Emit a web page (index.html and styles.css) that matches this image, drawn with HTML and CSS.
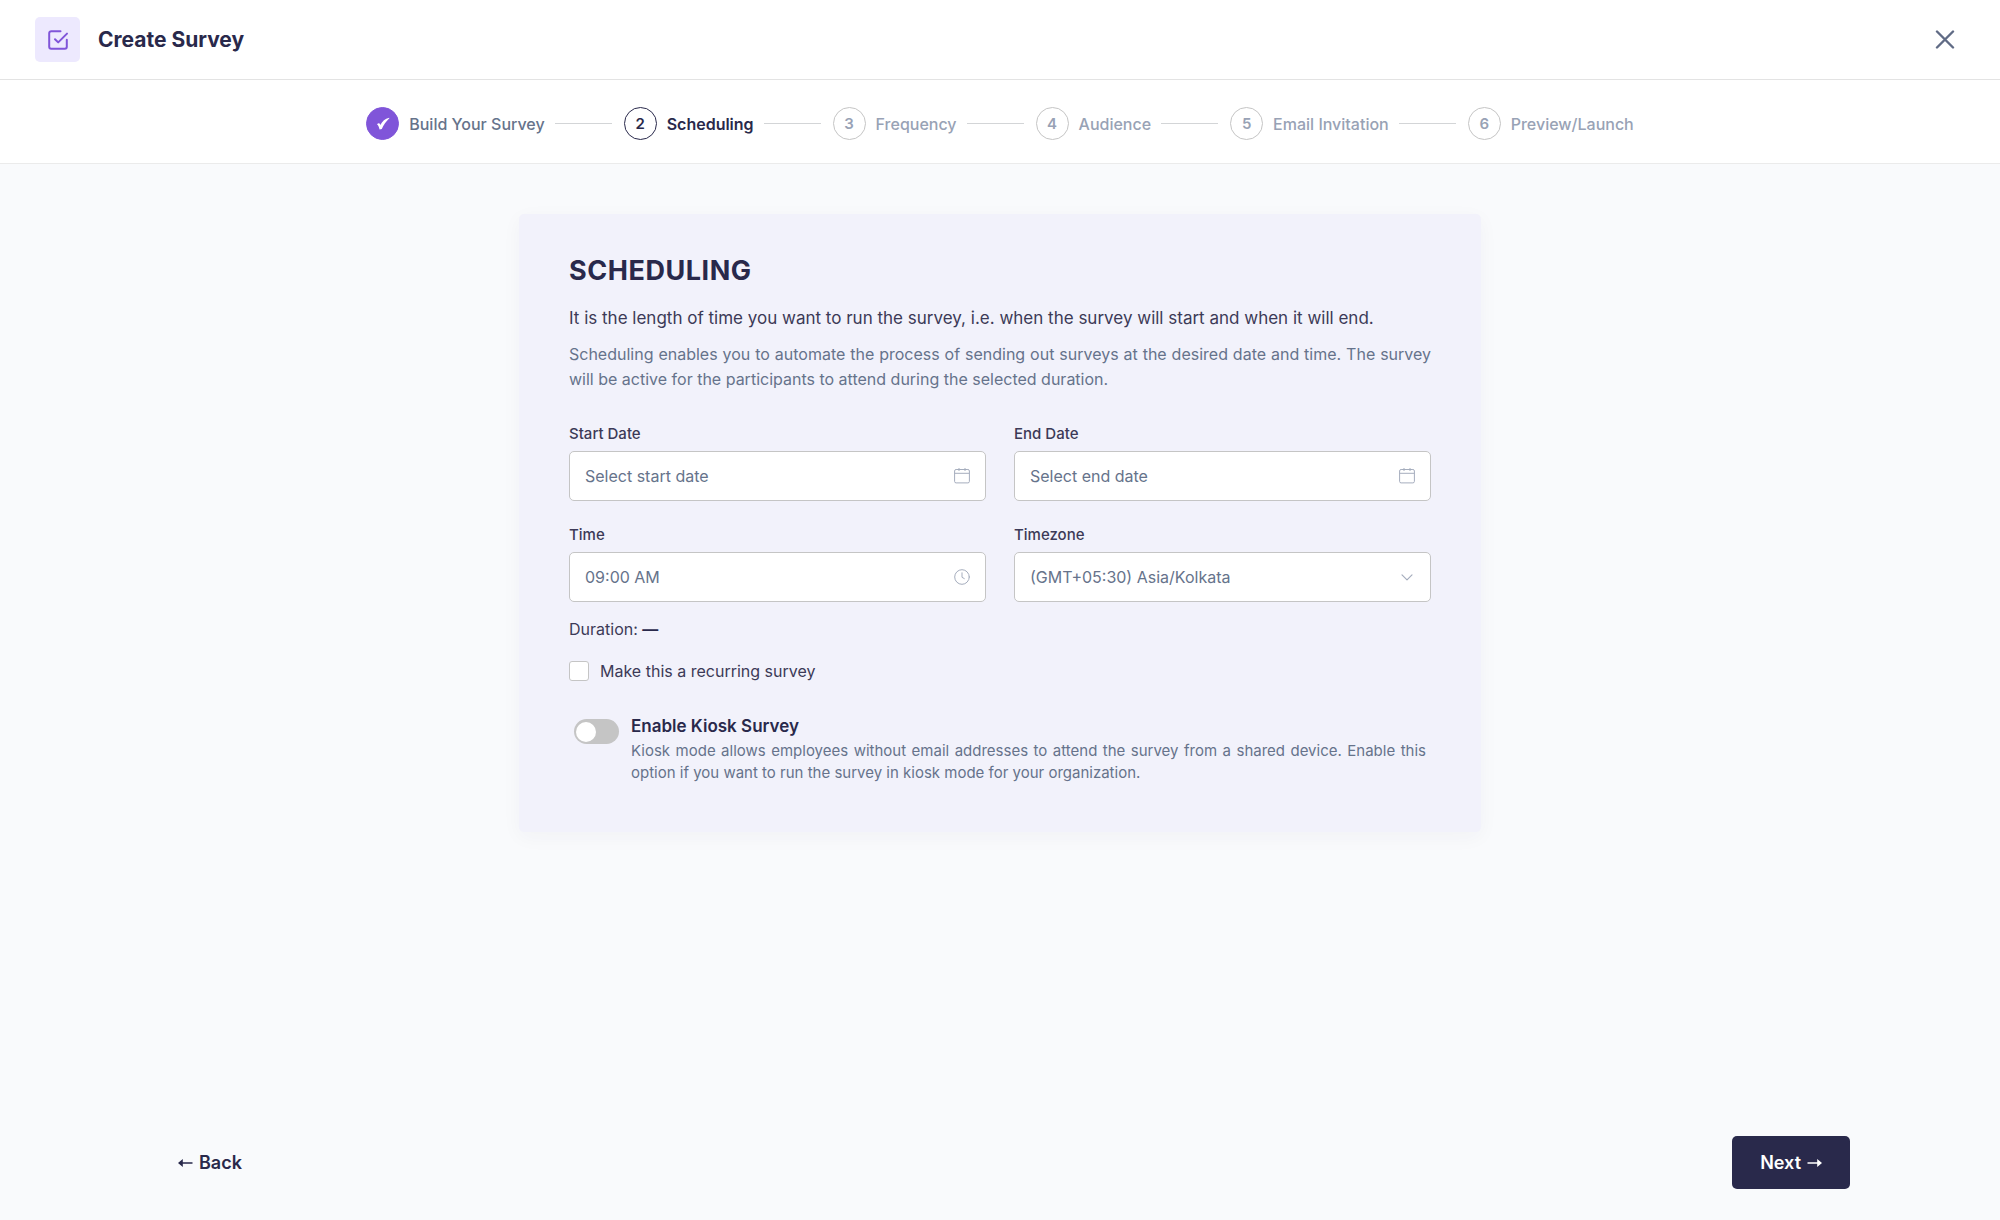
FILE: index.html
```html
<!DOCTYPE html>
<html lang="en">
<head>
<meta charset="utf-8">
<meta name="viewport" content="width=device-width, initial-scale=1">
<title>Create Survey</title>
<link rel="stylesheet" href="styles.css">
</head>
<body>
<div class="page">
  <header class="topbar">
    <span class="topbar-icon">
      <svg width="24" height="24" viewBox="0 0 24 24" fill="none" stroke="currentColor" stroke-width="2" stroke-linecap="round" stroke-linejoin="round" aria-hidden="true"><path d="M14.500 3.200H5.200a2 2 0 0 0-2 2v13.600a2 2 0 0 0 2 2h13.600a2 2 0 0 0 2-2v-7M9 11.200l3.200 3.200 8.800-8.800"/></svg>
    </span>
    <h1 class="topbar-title">Create Survey</h1>
    <button class="close" type="button" aria-label="Close">
      <svg width="20" height="20" viewBox="0 0 20 20" fill="none" stroke="currentColor" stroke-width="2.400" stroke-linecap="round" aria-hidden="true"><path d="M2 1.500l16 16M18 1.500L2 17.500"/></svg>
    </button>
  </header>

  <ol class="stepper">
    <li class="step step-done">
      <span class="step-mark"><svg width="14" height="14" viewBox="0 0 14 14" fill="currentColor" aria-hidden="true"><path d="M1 7.200C2.200 6 3.700 5.400 4.300 8 6.300 4.500 9 1.600 13.200.800l.2.500C10 4.500 7.600 8 5.800 12L3.600 12.600C3 10.500 2.500 8.200 1 7.200z"/></svg></span>
      <span class="step-label">Build Your Survey</span>
    </li>
    <li class="step step-current" aria-current="step"><span class="step-mark">2</span><span class="step-label">Scheduling</span></li>
    <li class="step"><span class="step-mark">3</span><span class="step-label">Frequency</span></li>
    <li class="step"><span class="step-mark">4</span><span class="step-label">Audience</span></li>
    <li class="step"><span class="step-mark">5</span><span class="step-label">Email Invitation</span></li>
    <li class="step"><span class="step-mark">6</span><span class="step-label">Preview/Launch</span></li>
  </ol>

  <main class="content">
    <form class="card" id="scheduling">
      <h2 class="card-title">SCHEDULING</h2>
      <p class="lead">It is the length of time you want to run the survey, i.e. when the survey will start and when it will end.</p>
      <p class="description">Scheduling enables you to automate the process of sending out surveys at the desired date and time. The survey will be active for the participants to attend during the selected duration.</p>

      <div class="fields">
        <div class="field">
          <label for="start-date">Start Date</label>
          <div class="control">
            <input id="start-date" type="text" placeholder="Select start date">
            <svg class="control-icon" width="16" height="16" viewBox="0 0 16 16" fill="none" stroke="currentColor" aria-hidden="true"><rect x=".6" y="1.500" width="14.800" height="13.400" rx="1.500"/><path d="M.6 5.300h14.800M5 0v3M11 0v3"/></svg>
          </div>
        </div>
        <div class="field">
          <label for="end-date">End Date</label>
          <div class="control">
            <input id="end-date" type="text" placeholder="Select end date">
            <svg class="control-icon" width="16" height="16" viewBox="0 0 16 16" fill="none" stroke="currentColor" aria-hidden="true"><rect x=".6" y="1.500" width="14.800" height="13.400" rx="1.500"/><path d="M.6 5.300h14.800M5 0v3M11 0v3"/></svg>
          </div>
        </div>
        <div class="field">
          <label for="time">Time</label>
          <div class="control">
            <input id="time" type="text" value="09:00 AM">
            <svg class="control-icon" width="16" height="16" viewBox="0 0 16 16" fill="none" stroke="currentColor" stroke-linecap="round" aria-hidden="true"><circle cx="8" cy="8" r="7.300"/><path d="M8 3.800v4.500l2.300 1.300"/></svg>
          </div>
        </div>
        <div class="field">
          <label for="timezone">Timezone</label>
          <div class="control">
            <select id="timezone"><option>(GMT+05:30) Asia/Kolkata</option></select>
            <svg class="control-icon" width="16" height="16" viewBox="0 0 16 16" fill="none" stroke="currentColor" stroke-width="1.200" stroke-linecap="round" stroke-linejoin="round" aria-hidden="true"><path d="M3 5.800l5 5 5-5"/></svg>
          </div>
        </div>
      </div>

      <p class="duration">Duration: <strong>—</strong></p>

      <label class="recurring"><input class="checkbox" type="checkbox">Make this a recurring survey</label>

      <div class="kiosk">
        <input class="switch" id="kiosk" type="checkbox" role="switch" aria-describedby="kiosk-note">
        <div class="kiosk-text">
          <label class="kiosk-title" for="kiosk">Enable Kiosk Survey</label>
          <p class="kiosk-note" id="kiosk-note">Kiosk mode allows employees without email addresses to attend the survey from a shared device. Enable this option if you want to run the survey in kiosk mode for your organization.</p>
        </div>
      </div>
    </form>
  </main>

  <footer class="actions">
    <button class="button button-plain" type="button">
      <svg width="15" height="10" viewBox="0 0 15 10" fill="currentColor" aria-hidden="true"><path d="M0 5l4.800-4v3.200H14.500v1.600H4.800V9z"/></svg>
      Back
    </button>
    <button class="button button-primary" type="submit" form="scheduling">
      Next
      <svg width="15" height="10" viewBox="0 0 15 10" fill="currentColor" aria-hidden="true"><path d="M15 5l-4.800-4v3.200H.5v1.600h9.700V9z"/></svg>
    </button>
  </footer>
</div>
</body>
</html>
```

FILE: styles.css
```css
:root {
  --ink: #29294b;
  --text: #3c3a57;
  --muted: #66738b;
  --faint: #98a2b5;
  --line: #c5c5c5;
  --accent: #8055d9;
}

* {
  box-sizing: border-box;
}

body {
  margin: 0;
  background: #f9fafc;
  color: var(--text);
  font-family: Inter, "Liberation Sans", sans-serif;
  font-size: 16px;
}

h1, h2, p, ol {
  margin: 0;
  padding: 0;
}

button, input, select {
  font: inherit;
  color: inherit;
}

svg {
  display: block;
}

.page {
  display: flex;
  flex-direction: column;
  min-height: 100vh;
}

.topbar {
  display: flex;
  align-items: center;
  gap: 18px;
  padding: 17px 35px;
  background: #fff;
  border-bottom: 1px solid #e3e3e3;
}

.topbar-icon {
  display: grid;
  place-items: center;
  width: 45px;
  height: 45px;
  border-radius: 5px;
  background: #ede9fe;
  color: var(--accent);
}

.topbar-title {
  color: var(--ink);
  font-size: 21px;
  font-weight: 700;
}

.close {
  margin-left: auto;
  padding: 10px;
  border: 0;
  background: none;
  color: #606b85;
  cursor: pointer;
}

.stepper {
  display: flex;
  justify-content: center;
  gap: 12px;
  padding: 27px 24px 23px;
  background: #fff;
  border-bottom: 1px solid #ebebeb;
  list-style: none;
}

.step {
  display: flex;
  align-items: center;
  gap: 10px;
  color: var(--faint);
  font-size: 16px;
  font-weight: 500;
}

.step:not(:last-child)::after {
  content: "";
  width: 57px;
  height: 1px;
  background: #d3d5d7;
}

.step-mark {
  display: grid;
  place-items: center;
  width: 33px;
  height: 33px;
  border: 1px solid var(--line);
  border-radius: 50%;
  font-size: 15px;
  font-weight: 600;
}

.step-done {
  color: var(--muted);
}

.step-done .step-mark {
  border-color: var(--accent);
  background: var(--accent);
  color: #fff;
}

.step-current {
  color: var(--ink);
  font-weight: 600;
}

.step-current .step-mark {
  border-color: var(--ink);
}

.content {
  flex: 1;
  padding: 50px 24px;
}

.card {
  max-width: 962px;
  margin: 0 auto;
  padding: 40px 50px 48px;
  border-radius: 5px;
  background: #f2f2fb;
  box-shadow: 0 5px 20px rgba(41, 41, 75, 0.04);
}

.card-title {
  margin-bottom: 16px;
  color: var(--ink);
  font-size: 27px;
  font-weight: 700;
  line-height: 34px;
  letter-spacing: 0.02em;
}

.lead {
  margin-bottom: 10px;
  font-size: 17px;
  line-height: 28px;
}

.description {
  margin-bottom: 32px;
  color: var(--muted);
  font-size: 16px;
  line-height: 25px;
  text-align: justify;
}

.fields {
  display: grid;
  grid-template-columns: 1fr 1fr;
  gap: 24px 28px;
  margin-bottom: 16px;
}

.field {
  display: flex;
  flex-direction: column;
  gap: 7px;
}

.field label {
  font-size: 15px;
  font-weight: 500;
  line-height: 20px;
}

.control {
  display: grid;
  align-items: center;
}

.control > * {
  grid-area: 1 / 1;
}

.control input,
.control select {
  width: 100%;
  height: 50px;
  padding: 0 48px 0 15px;
  border: 1px solid var(--line);
  border-radius: 5px;
  appearance: none;
  background: #fff;
  color: var(--muted);
  font-size: 16px;
}

.control input::placeholder {
  color: var(--muted);
  opacity: 1;
}

.control-icon {
  justify-self: end;
  margin-right: 16px;
  color: #a5adbd;
  pointer-events: none;
}

.duration {
  margin-bottom: 20px;
  font-size: 16px;
  line-height: 22px;
}

.duration strong {
  color: var(--ink);
  font-weight: 700;
}

.recurring {
  display: flex;
  align-items: center;
  gap: 11px;
  margin-bottom: 32px;
  font-size: 16px;
  line-height: 22px;
}

.checkbox {
  width: 20px;
  height: 20px;
  margin: 0;
  border: 1px solid var(--line);
  border-radius: 3px;
  appearance: none;
  background: #fff;
}

.checkbox:checked {
  border-color: var(--accent);
  background: var(--accent);
}

.kiosk {
  display: flex;
  align-items: flex-start;
  gap: 12px;
  padding: 0 5px;
}

.switch {
  display: flex;
  flex: none;
  align-items: center;
  width: 45px;
  height: 25px;
  margin: 5px 0 0;
  padding: 0 2px;
  border-radius: 13px;
  appearance: none;
  background: var(--line);
}

.switch::before {
  content: "";
  width: 20px;
  height: 20px;
  border-radius: 50%;
  background: #fff;
}

.switch:checked {
  justify-content: flex-end;
  background: var(--accent);
}

.kiosk-title {
  display: block;
  margin-bottom: 2px;
  color: var(--ink);
  font-size: 17px;
  font-weight: 600;
  line-height: 24px;
}

.kiosk-note {
  color: var(--muted);
  font-size: 15px;
  line-height: 22px;
  text-align: justify;
}

.actions {
  display: flex;
  justify-content: space-between;
  padding: 0 150px 31px;
}

.button {
  display: flex;
  align-items: center;
  gap: 6px;
  height: 53px;
  padding: 0 28px;
  border: 0;
  border-radius: 5px;
  font-size: 18px;
  font-weight: 600;
  cursor: pointer;
}

.button-plain {
  background: none;
  color: var(--ink);
}

.button-primary {
  background: var(--ink);
  color: #fff;
}
```
